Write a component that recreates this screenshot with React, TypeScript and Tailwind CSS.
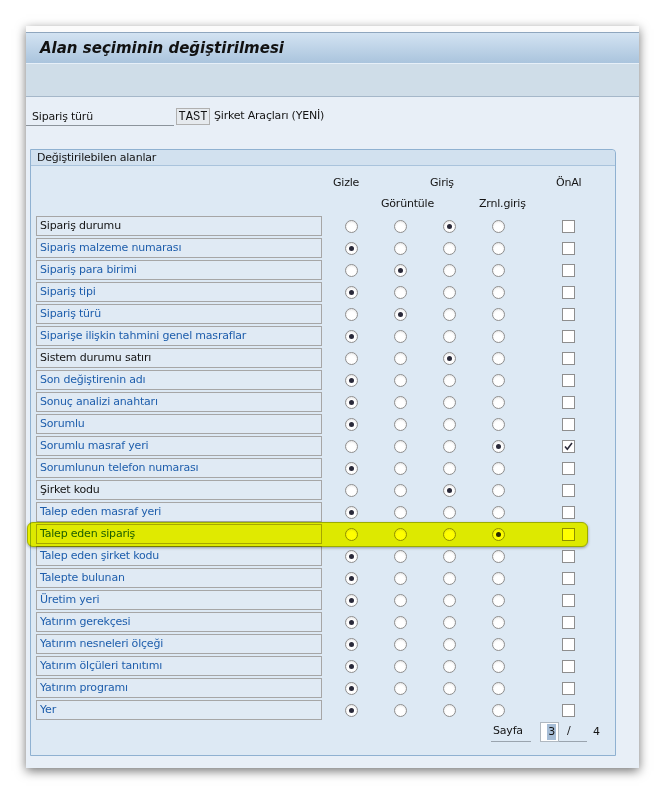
import React from "react";

type Row = { label: string; sel: number; black?: boolean; check?: boolean; hl?: boolean };

const rows: Row[] = [
  { label: "Sipariş durumu", sel: 2, black: true },
  { label: "Sipariş malzeme numarası", sel: 0 },
  { label: "Sipariş para birimi", sel: 1 },
  { label: "Sipariş tipi", sel: 0 },
  { label: "Sipariş türü", sel: 1 },
  { label: "Siparişe ilişkin tahmini genel masraflar", sel: 0 },
  { label: "Sistem durumu satırı", sel: 2, black: true },
  { label: "Son değiştirenin adı", sel: 0 },
  { label: "Sonuç analizi anahtarı", sel: 0 },
  { label: "Sorumlu", sel: 0 },
  { label: "Sorumlu masraf yeri", sel: 3, check: true },
  { label: "Sorumlunun telefon numarası", sel: 0 },
  { label: "Şirket kodu", sel: 2, black: true },
  { label: "Talep eden masraf yeri", sel: 0 },
  { label: "Talep eden sipariş", sel: 3, hl: true },
  { label: "Talep eden şirket kodu", sel: 0 },
  { label: "Talepte bulunan", sel: 0 },
  { label: "Üretim yeri", sel: 0 },
  { label: "Yatırım gerekçesi", sel: 0 },
  { label: "Yatırım nesneleri ölçeği", sel: 0 },
  { label: "Yatırım ölçüleri tanıtımı", sel: 0 },
  { label: "Yatırım programı", sel: 0 },
  { label: "Yer", sel: 0 },
];

const Radio = ({ on }: { on: boolean }) => (
  <span className="flex h-[13px] w-[13px] items-center justify-center rounded-full border border-[#8e8e8e] bg-white shadow-[inset_0_1px_2px_rgba(0,0,0,0.1)]">
    {on && <span className="h-[5px] w-[5px] rounded-full bg-[#2a2a3a]" />}
  </span>
);

const Check = ({ on }: { on?: boolean }) => (
  <span className="flex h-[13px] w-[13px] items-center justify-center border border-[#8e8e8e] bg-white">
    {on && (
      <svg width="9" height="9" viewBox="0 0 9 9">
        <path d="M1 4.5 L3.3 7.2 L8 1" fill="none" stroke="#2a2a3a" strokeWidth="1.6" />
      </svg>
    )}
  </span>
);

const FieldRow = ({ r }: { r: Row }) => (
  <div className="relative flex h-[22px] items-start">
    <div
      className={`ml-[5px] flex h-[20px] w-[286px] items-center border border-[#a6a6a6] bg-[#e0eaf4] pl-[3px] ${
        r.black ? "text-[#141414]" : "text-[#1e5eac]"
      }`}
    >
      {r.label}
    </div>
    <div className="ml-[5px] flex h-[20px] items-center">
      {[0, 1, 2, 3].map((i) => (
        <div key={i} className="flex w-[49px] justify-center">
          <Radio on={r.sel === i} />
        </div>
      ))}
      <div className="flex w-[90px] justify-center">
        <Check on={r.check} />
      </div>
    </div>
    {/* yellow marker over the row */}
    {r.hl && (
      <div className="absolute left-[-4px] top-[-2px] z-10 h-[25px] w-[561px] rounded-[6px] border border-[#b4bc00] bg-[#ffff00] mix-blend-multiply shadow-[0_1px_3px_rgba(0,0,0,0.35)]" />
    )}
  </div>
);

export default function App() {
  return (
    <div
      className="min-h-[794px] w-[666px] bg-white pl-[26px] pt-[26px] text-[11px] tracking-[-0.2px]"
      style={{ fontFamily: '"DejaVu Sans", Verdana, sans-serif' }}
    >
      <div className="flex h-[742px] w-[613px] flex-col bg-[#e8eff7] shadow-[0_3px_10px_rgba(0,0,0,0.55)]">
        {/* title */}
        <div className="h-[6px] bg-[#fbfbfb]" />
        <div className="flex h-[31px] items-center border-t border-[#8fa6be] bg-gradient-to-b from-[#d3e3f2] to-[#aac4dd] pl-[14px]">
          <h1 className="text-[15px] font-bold italic tracking-normal text-[#111]">Alan seçiminin değiştirilmesi</h1>
        </div>
        <div className="h-[34px] border-t border-[#e6eff8] border-b border-b-[#a5b7c9] bg-[#cfdde8]" />

        {/* Sipariş türü */}
        <div className="mt-[10px] flex h-[19px] items-center">
          <div className="flex h-[19px] w-[148px] items-center border-b border-[#8c949c] pl-[6px] pt-[2px] text-[#141414]">
            Sipariş türü
          </div>
          <div
            className="ml-[2px] flex h-[17px] w-[34px] items-center justify-center border border-[#b0b0b0] bg-[#e6eaee] text-[12px] tracking-normal text-[#141414]"
            style={{ fontFamily: '"Liberation Mono", monospace' }}
          >
            TAST
          </div>
          <div className="ml-[4px] text-[#141414]">Şirket Araçları (YENİ)</div>
        </div>

        {/* group box */}
        <div className="ml-[4px] mt-[23px] flex h-[607px] w-[586px] flex-col rounded-tr-[4px] border border-[#8fb1d1] bg-[#dde9f4]">
          <div className="flex h-[16px] items-center rounded-tr-[4px] border-b border-[#a9c3dc] bg-[#d2e1ef] pl-[6px] pt-[1px] text-[#141414]">
            Değiştirilebilen alanlar
          </div>
          <div className="mt-[9px] flex h-[16px] items-center text-[#141414]">
            <span className="w-[302px]" />
            <span className="w-[97px]">Gizle</span>
            <span className="w-[126px]">Giriş</span>
            <span>ÖnAl</span>
          </div>
          <div className="mt-[5px] flex h-[16px] items-center text-[#141414]">
            <span className="w-[350px]" />
            <span className="w-[98px]">Görüntüle</span>
            <span>Zrnl.giriş</span>
          </div>
          <div className="mt-[4px] flex flex-col">
            {rows.map((r) => (
              <FieldRow key={r.label} r={r} />
            ))}
          </div>
          <div className="mt-[0px] flex h-[20px] items-stretch text-[#141414]">
            <span className="w-[460px]" />
            <span className="flex w-[40px] items-center border-b border-[#9aa4ae] pl-[2px]">Sayfa</span>
            <span className="w-[9px]" />
            <span className="flex w-[19px] items-center justify-end border border-[#b0b8c0] bg-white pr-[2px]">
              <span className="bg-[#a6bdd6] px-[1px]">3</span>
            </span>
            <span className="flex w-[28px] items-center border-b border-[#9aa4ae] pl-[8px]">/</span>
            <span className="flex items-center pl-[6px]">4</span>
          </div>
        </div>
      </div>
    </div>
  );
}
